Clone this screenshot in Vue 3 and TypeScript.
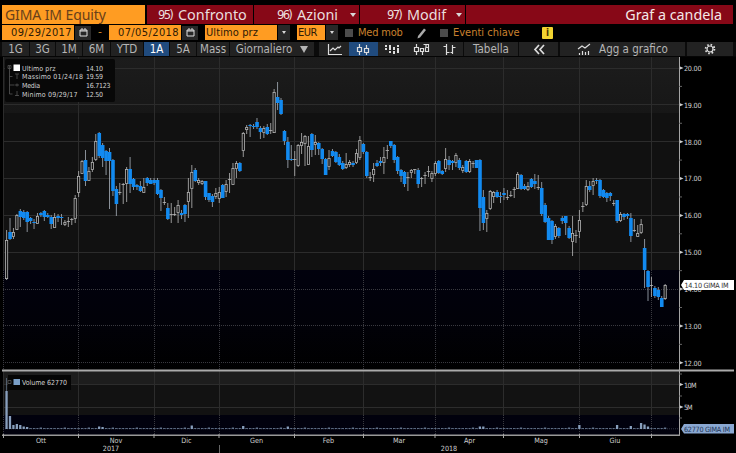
<script setup lang="ts">
type Candle = { x: number; high: number; top: number; bottom: number; low: number; down: boolean }

// One trading day per entry: direction (b = down, w = up), then high, body top, body bottom and low.
const sessions = `
w230,240,279,280 b218,232,239,240 w228,232,237,239 w214,215,230,230 b209,211,217,227 b210,212,218,220 b211,212,222,232 b217,218,221,224 b219,222,223,229 w213,216,224,224
b212,213,215,217 b210,211,217,221 b213,215,217,218 b215,217,224,229 w213,217,228,228 b214,216,218,222 b214,217,218,225 w220,222,225,226 w217,221,222,227 w218,219,221,225
w195,198,219,223 w171,176,193,197 w160,161,174,174 b150,160,181,186 w167,171,181,181 w157,162,170,172 w134,141,160,161 b132,133,156,158 b143,145,158,167 b150,151,161,175
b148,152,161,209 b159,160,191,196 b186,189,204,216 w183,192,193,195 w183,184,185,204 w167,169,184,202 b157,169,184,193 b178,179,187,190 b184,185,187,190 b181,186,191,192
w178,187,193,193 b177,178,183,186 b178,180,184,184 b178,180,183,185 b178,180,194,195 b189,190,198,211 w197,202,203,205 b203,208,219,220 w203,214,215,223 w207,214,215,216
w200,205,213,223 b210,213,215,219 b204,205,214,222 w178,192,202,218 w165,172,189,208 b168,170,181,182 w178,180,183,185 w180,181,184,185 b181,181,197,200 b193,193,200,202
b194,196,202,207 w188,193,197,199 w187,192,199,203 b184,185,198,198 w180,184,192,197 w173,179,181,193 w163,168,185,185 w161,163,169,178 b162,163,171,172 w132,133,151,157
w125,127,130,134 b124,125,126,137 b124,126,127,129 b118,122,127,129 b126,128,132,139 w126,128,133,138 b124,127,134,135 w123,130,131,134 w89,92,133,133 b82,97,103,110
b98,100,114,115 b130,131,141,145 b137,142,160,168 b145,159,160,161 w151,159,160,176 w144,145,166,167 w133,142,146,154 w135,136,144,166 w136,146,165,165 b133,134,150,157
w135,142,145,155 b142,143,149,155 b148,149,159,164 b158,159,175,175 w150,158,167,170 b149,151,156,157 b151,152,162,163 b154,157,165,166 b161,163,169,170 w153,164,168,169
w160,162,165,167 b161,163,165,167 w149,153,163,164 w136,140,158,160 b143,144,152,154 b151,152,176,178 w172,177,178,181 w163,169,175,182 b160,163,166,167 b157,161,163,166
w147,157,163,174 w145,150,152,159 b141,141,146,148 b144,145,160,163 b156,157,171,174 b169,170,176,182 b171,172,184,187 w172,177,179,191 w169,170,173,178 w169,169,171,174
b168,170,184,188 w177,178,179,187 w172,175,177,184 w166,171,173,177 w171,173,179,182 w161,163,174,176 b160,161,173,174 b170,171,174,175 w148,159,169,172 b156,160,165,170
b160,161,163,170 w153,155,163,167 b158,160,168,170 w165,167,171,173 b160,161,172,173 w159,161,172,173 w161,163,164,168 b160,160,168,168 b159,160,208,231 b190,197,223,230
w210,213,219,232 w190,191,209,210 w191,192,197,203 b190,192,197,198 b192,196,197,203 b188,193,195,200 w190,197,198,200 w191,195,196,197 w187,189,191,198 w172,174,189,189
b174,175,189,190 b184,186,189,190 w182,186,190,191 b178,179,187,188 b174,181,184,189 w175,187,189,190 b182,188,214,216 b203,205,222,223 b216,218,240,240 b220,221,240,244
w224,226,237,239 b227,228,236,238 b216,218,221,224 b216,216,223,235 b226,228,238,239 w216,233,242,256 w230,235,237,243 w210,220,232,238 w202,206,208,212 w180,186,205,206
b181,186,190,192 w178,181,186,195 b178,180,181,184 b179,180,196,198 b189,190,197,198 b192,193,198,202 b192,193,196,201 w200,203,204,206 b200,200,221,223 w212,214,221,222
b213,214,217,220 b213,214,216,219 b213,218,236,242 w219,230,232,232 w225,233,237,237 w219,224,233,234 b239,248,270,288 b270,271,287,301 w277,285,287,297 b286,288,296,298
b287,290,297,300 b296,298,307,307 w284,285,299,300`

const candles: Candle[] = sessions.trim().split(/\s+/).map((entry, i) => {
  const [high, top, bottom, low] = entry.slice(1).split(',').map(Number)
  return { x: 6.6 + i * 3.43, high, top, bottom, low, down: entry[0] === 'b' }
})

const bigVolumes: Record<number, number> = {
  0: 38, 1: 13, 2: 4, 3: 5, 4: 4, 5: 2.5, 6: 2, 27: 2.5, 28: 2, 54: 3.5, 69: 3, 82: 2.5,
  138: 2.5, 139: 2.5, 167: 4, 178: 4, 182: 3, 185: 6, 186: 4.5, 187: 2.5,
}
const volumes = candles.map((c, i) => ({ x: c.x, h: bigVolumes[i] ?? (i % 7 === 3 ? 1.5 : 0.9), small: !(i in bigVolumes) }))

const months = [
  { x: 3.5, label: 'Ott', at: 41 }, { x: 78.5, label: 'Nov', at: 116 }, { x: 154, label: 'Dic', at: 186.5 },
  { x: 219, label: 'Gen', at: 256.5 }, { x: 294.5, label: 'Feb', at: 328.5 }, { x: 363.5, label: 'Mar', at: 399 },
  { x: 435, label: 'Apr', at: 469.5 }, { x: 503.5, label: 'Mag', at: 541 }, { x: 579.5, label: 'Giu', at: 615 },
  { x: 651.5, label: '', at: 0 },
]
const prices = [20, 19, 18, 17, 16, 15, 14, 13, 12].map((p, i) => ({ label: p.toFixed(2), y: 68 + i * 36.85 }))
const legend = [
  { label: 'Ultimo prz', w: 33.5, value: '14.10', vw: 17 },
  { label: 'Massimo 01/24/18', w: 61, value: '19.59', vw: 17 },
  { label: 'Media', w: 18, value: '16.7123', vw: 24.5 },
  { label: 'Minimo 09/29/17', w: 55.5, value: '12.50', vw: 17 },
]
const ranges = ['1G', '3G', '1M', '6M', 'YTD', '1A', '5A', 'Mass']
const actions = [
  { n: '95)', label: 'Confronto', menu: false },
  { n: '96)', label: 'Azioni', menu: true },
  { n: '97)', label: 'Modif', menu: true },
]
</script>

<template>
  <main class="terminal">
    <header class="title-row">
      <div class="ticker">GIMA IM Equity</div>
      <div v-for="a in actions" :key="a.n" class="action" :class="{ first: !a.menu }">
        <span class="num">{{ a.n }}</span><span>{{ a.label }}</span><i v-if="a.menu" class="caret" />
      </div>
      <div class="view-name">Graf a candela</div>
    </header>

    <section class="filter-row">
      <div class="date">09/29/2017</div>
      <span class="picker"><svg width="9" height="9"><path d="M1 2h7v6H1zM1 3h7M3 0v2M6 0v2" /></svg></span>
      <span class="dash">-</span>
      <div class="date second">07/05/2018</div>
      <span class="picker"><svg width="9" height="9"><path d="M1 2h7v6H1zM1 3h7M3 0v2M6 0v2" /></svg></span>
      <div class="select field">Ultimo prz</div><span class="drop"><i class="caret" /></span>
      <div class="select currency">EUR</div><span class="drop"><i class="caret" /></span>
      <i class="check" /><span class="option">Med mob</span>
      <svg class="pencil" width="12" height="12"><path d="M2 9L8 1.5 10 3 4 10.5 1.5 11.5z" /></svg>
      <i class="check" /><span class="option events">Eventi chiave</span>
      <b class="info">i</b>
    </section>

    <nav class="tool-row">
      <span v-for="r in ranges" :key="r" class="btn" :class="['r' + r, { active: r === '1A' }]">{{ r }}</span>
      <span class="btn period">Giornaliero<i class="caret" /></span>
      <span class="styles">
        <span class="icon"><svg width="15" height="13"><path d="M1.5 1v10.500H15M3 8l3-3 2 2 3-3 1 1 2-2" /></svg></span>
        <span class="icon active"><svg width="15" height="13"><path d="M3.500 1v3M3.500 9v3M10.500 2v3M10.500 10v2M1.500 4.500h4v4h-4zM8.500 5.500h4v4h-4z" /></svg></span>
        <span class="icon"><svg width="16" height="13"><path class="bold" d="M2 2v2M2 5v2M6 2v5M6 8v2M10 4v3M10 8v3M14 2v2M14 5v5" /></svg></span>
        <span class="icon"><svg width="17" height="13"><path d="M3.500 1v3M3.500 9v3M1.500 4.500h4v4h-4zM9.500 12v-3M7.500 5.500h3v3h-3zM10.500 1.500h5v7h-3v-4M13 1.500v3h2.500" /></svg></span>
        <span class="icon"><svg width="15" height="13"><path d="M4.500 1v11M1.500 3.500h3M4.500 9.500h3M10.500 2v9M8.500 9.500h2M10.500 4.500h3" /></svg></span>
      </span>
      <span class="btn table">Tabella</span>
      <span class="btn collapse"><svg width="12" height="11"><path d="M6 1L2 5.500 6 10M11 1L7 5.500 11 10" /></svg></span>
      <span class="btn add"><svg width="14" height="13"><path d="M1 6l4-3 3 2 5-4M2.500 12v-2M5.500 12V8M8.500 12v-3M11.500 12V8" /></svg>Agg a grafico</span>
      <span class="btn settings"><svg width="12" height="12"><circle cx="6" cy="6" r="3" /><circle class="teeth" cx="6" cy="6" r="4.400" /></svg></span>
    </nav>

    <svg class="chart" width="736" height="396" viewBox="0 57 736 396">
      <defs>
        <linearGradient id="upper" x1="0" y1="0" x2="0" y2="1"><stop offset="0" stop-color="#1c1c1c" /><stop offset="1" stop-color="#171717" /></linearGradient>
        <linearGradient id="deep" x1="0" y1="0" x2="0" y2="1"><stop offset="0" stop-color="#01010d" /><stop offset=".55" stop-color="#010108" /><stop offset="1" stop-color="#000" /></linearGradient>
      </defs>
      <rect x="3" y="57" width="676" height="56" fill="url(#upper)" />
      <rect x="3" y="113" width="676" height="157" fill="#111" />
      <rect x="3" y="270" width="676" height="100" fill="url(#deep)" />
      <rect x="3" y="371" width="676" height="14" fill="#1d1d1d" />
      <rect x="3" y="385" width="676" height="30" fill="#121212" />
      <rect x="3" y="415" width="676" height="20" fill="#01010d" />

      <g class="grid">
        <path v-for="p in prices" :key="p.label" :class="{ dotted: p.y > 270 }" :d="`M3 ${Math.floor(p.y) + .5}H679`" />
        <path d="M3 384.500H679M3 407.500H679" />
        <path v-for="m in months" :key="m.x" :d="`M${Math.floor(m.x) + .5} 57V270M${Math.floor(m.x) + .5} 371V415`" />
        <path v-for="m in months" :key="'d' + m.x" class="dotted" :d="`M${Math.floor(m.x) + .5} 270V370M${Math.floor(m.x) + .5} 415V435`" />
      </g>

      <g class="candles">
        <g v-for="(c, i) in candles" :key="i" :class="c.down ? 'down' : 'up'">
          <path :d="`M${c.x} ${c.high}V${c.top}M${c.x} ${c.bottom}V${c.low}`" />
          <rect v-if="c.down" :x="c.x - 1.75" :y="c.top" width="3.6" :height="c.bottom - c.top" />
          <rect v-else-if="c.bottom - c.top > 2" :x="c.x - 1.1" :y="c.top + .4" width="2.2" :height="c.bottom - c.top - .8" />
          <path v-else :d="`M${c.x - 1.7} ${c.top + .5}h3.400M${c.x} ${c.top}V${c.bottom}`" />
        </g>
      </g>

      <g class="volume">
        <path d="M3 428.800H679" class="base" />
        <rect x="6" y="378" width="1" height="13" opacity=".5" />
        <rect v-for="(v, i) in volumes" :key="i" :x="v.x - 1.2" :y="429 - v.h" width="2.3" :height="v.h" :class="{ small: v.small }" />
      </g>

      <g class="axes">
        <path d="M679.500 57V435" />
        <path class="divider" d="M2 370.500H734" />
        <path class="bottom" d="M2 435.300H680" />
        <path v-for="m in months" :key="m.x" :d="`M${m.x} 434v4`" />
        <path class="year-mark" d="M219.500 445v8" />
        <path v-for="p in prices.slice(0, 8)" :key="p.label" class="minor" :d="`M679 ${p.y + 18.4}h3`" />
        <path class="minor" d="M679 374h3M679 396h3M679 418h3" />
      </g>
      <g v-for="p in prices" :key="p.label" class="scale">
        <path :d="`M680 ${p.y - 1.5}l3.500 1.500-3.500 1.500z`" />
        <text x="684" :y="p.y + 2.8" textLength="17.500">{{ p.label }}</text>
      </g>
      <g class="scale">
        <path d="M680 383l3.500 1.500-3.500 1.500zM680 405.500l3.500 1.500-3.500 1.500z" />
        <text x="684" y="388" textLength="12.500">10M</text><text x="684" y="410" textLength="8.500">5M</text>
      </g>
      <g class="scale months">
        <text v-for="m in months" :key="m.x" :x="m.at" y="442.800">{{ m.label }}</text>
        <text x="111" y="451.200">2017</text><text x="449" y="451.200">2018</text>
      </g>

      <rect x="5" y="59" width="110" height="43" rx="2" fill="#080808" />
      <g class="tree">
        <path d="M9.500 66v28h3M9.500 76.500h3M9.500 85h5M8 65.500h3v3H8zM15 74h4M17 74v5M15 85h4M17 83.500v3M17 91v5M15 95.500h4" />
        <rect class="swatch" x="13.500" y="64.500" width="6.500" height="6.500" />
      </g>
      <g v-for="(l, i) in legend" :key="l.label" class="legend">
        <text x="22" :y="70.500 + i * 8.700" :textLength="l.w">{{ l.label }}</text>
        <text x="86" :y="70.500 + i * 8.700" :textLength="l.vw">{{ l.value }}</text>
      </g>
      <rect x="8" y="375" width="63" height="15" fill="#050505" />
      <path class="treebox" d="M8 380.500h3v3H8z" />
      <rect x="13.500" y="379" width="6.500" height="6" fill="#7a9fc7" />
      <text x="22" y="384.800" class="legend-vol" textLength="45">Volume 62770</text>

      <path d="M681 285l3-5h50v10h-50z" fill="#fff" />
      <text x="684.500" y="287.700" class="tag" textLength="44">14.10 GIMA IM</text>
      <path d="M681 429l3-5h50v9.500h-50z" fill="#8aa8d2" />
      <text x="684" y="431.700" class="tag vol" textLength="46">62770 GIMA IM</text>
    </svg>
  </main>
</template>

<style>
body { margin: 0; background: #000; }
</style>

<style scoped>
.terminal { width: 736px; height: 453px; overflow: hidden; background: #000; color: #ccc; font-family: "DejaVu Sans Condensed", "DejaVu Sans", sans-serif; font-stretch: condensed; }
.title-row { display: flex; gap: 1px; height: 19px; padding: 5px 3px 0 2px; font: 16px/20px "Noto Sans", sans-serif; white-space: nowrap; }
.ticker { box-sizing: border-box; width: 143px; margin-right: 1px; padding-left: 3px; background: #ff9c22; color: #68401a; font-size: 14px; letter-spacing: -.1px; }
.action { display: flex; align-items: center; box-sizing: border-box; width: 105px; padding-left: 23px; background: #870817; color: #eadede; font-size: 14.4px; line-height: 19px; }
.action.first { width: 106px; padding-left: 11px; }
.action + .action + .action { padding-left: 27px; }
.num { width: 14px; margin-right: 6px; font: 13px "DejaVu Sans Condensed"; letter-spacing: -1.8px; }
.caret { width: 0; height: 0; border: 3px solid transparent; border-top: 4px solid #d8d8d8; border-bottom: 0; }
.action .caret { margin-left: auto; margin-right: 3px; }
.view-name { flex: 1; padding-right: 11px; text-align: right; background: #870817; color: #f4e7e7; font-size: 14.3px; }
.filter-row { display: flex; align-items: center; height: 15px; padding: 1px 0 1px 2px; font-size: 12px; line-height: 15px; white-space: nowrap; }
.date { width: 72px; height: 15px; background: #ff9c22; color: #2d1a06; text-align: center; font-size: 11px; letter-spacing: .4px; box-sizing: border-box; padding-left: 7px; }
.picker { display: grid; place-items: center; width: 16px; height: 14px; margin-left: 1px; background: #282828; }
.picker svg { fill: none; stroke: #ddd; }
.dash { width: 18px; text-align: center; color: #c9832c; }
.select { box-sizing: border-box; height: 15px; background: #ff9c22; color: #2d1a06; font-size: 11px; }
.field { width: 72px; margin-left: 7px; padding-left: 1px; letter-spacing: .1px; }
.currency { width: 28px; margin-left: 7px; padding-left: 1px; letter-spacing: -.5px; }
.drop { display: grid; place-items: center; width: 12px; height: 15px; margin-left: 1px; background: #282828; }
.drop .caret { border-width: 3px 2px 0; }
.check { width: 8px; height: 8px; margin-left: 7px; background: #4b4b4b; }
.option { width: 44px; margin-left: 5px; color: #c9802e; font-size: 11px; letter-spacing: -.2px; }
.pencil { margin-left: 14px; margin-right: 5px; fill: #aaa; }
.events { width: 67px; letter-spacing: 0; }
.info { width: 11px; height: 12px; margin-left: 22px; border-radius: 1px; background: #f2d431; color: #4a3800; text-align: center; font-size: 10px; line-height: 12px; }
.tool-row { display: flex; height: 14px; margin-top: 1px; padding-left: 2px; gap: 1px; font-size: 11.5px; line-height: 14px; background: #0b0b0b; border-bottom: 1px solid #050505; white-space: nowrap; }
.btn, .icon { display: flex; align-items: center; justify-content: center; box-sizing: border-box; flex: none; height: 14px; background: #222; }
.btn { width: 26px; color: #b5b5b5; }
.r1G { width: 27px; }
.r3G { width: 25px; }
.r6M { width: 27px; }
.rYTD { width: 32px; }
.r1A { width: 25px; }
.rMass { width: 32px; }
.btn.active, .icon.active { background: #204b7e; color: #fff; }
.period { width: 84px; gap: 8px; }
.period .caret { border-width: 7px 4px 0; border-top-color: #b5b5b5; }
.styles { display: flex; margin-left: 4px; }
.icon { width: 29px; }
.icon:nth-child(1), .icon:nth-child(4) { width: 30px; }
.icon:nth-child(3) { width: 28px; }
.icon:nth-child(5) { width: 27px; }
.tool-row svg { fill: none; stroke: #ddd; stroke-width: 1.2; }
.tool-row .bold { stroke-width: 2; }
.table { width: 54px; }
.collapse { width: 39px; }
.collapse svg { stroke-width: 1.7; }
.add { width: 125px; margin-left: 1px; gap: 8px; }
.settings { width: 46px; margin-left: 1px; }
.settings .teeth { stroke-dasharray: 1.6 1.856; stroke-width: 1.8; }
.chart { display: block; font-family: "DejaVu Sans Condensed", sans-serif; font-size: 7.2px; }
.grid { fill: none; stroke: #2c2c2c; stroke-width: 1; }
.dotted { stroke: #3a3a40; stroke-dasharray: 1 1; }
.candles path { fill: none; stroke-width: .8; }
.up { stroke: #b9b9b9; fill: #111; stroke-width: .8; }
.down path { stroke: #aab3bc; }
.down rect { fill: #128af0; }
.volume { fill: #889fbd; }
.small { opacity: .7; }
.base { stroke: #52596a; stroke-width: .6; stroke-dasharray: 1 1; }
.axes { fill: none; stroke: #a5a5a5; stroke-width: 1; }
.divider { stroke: #aaa; stroke-width: 2; }
.bottom { stroke-width: 1.5; stroke: #999; }
.minor, .year-mark { stroke: #666; }
.scale { fill: #d0d0d0; }
.months { text-anchor: middle; }
.tree, .treebox { fill: none; stroke: #555; stroke-width: .8; }
.swatch { fill: #fff; stroke: none; }
.legend, .legend-vol { fill: #d2d2d2; font-size: 7px; }
.tag { fill: #333; }
.tag.vol { fill: #203555; }
</style>
